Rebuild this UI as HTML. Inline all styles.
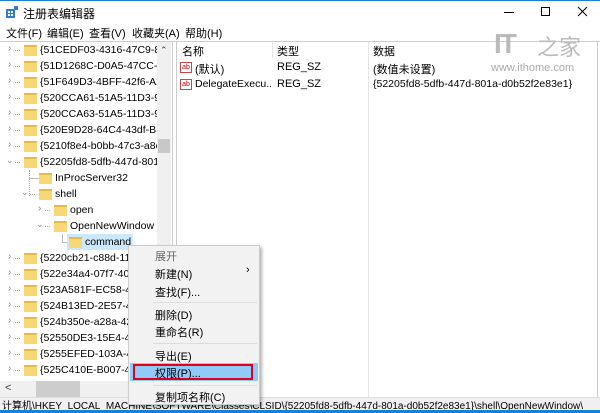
<!DOCTYPE html>
<html><head><meta charset="utf-8"><style>
*{margin:0;padding:0;box-sizing:border-box}
body{width:600px;height:413px;background:#fff;font-family:"Liberation Sans","Noto Sans CJK SC",sans-serif;font-size:11px;color:#000;position:relative;overflow:hidden}
.a{position:absolute;white-space:nowrap}
.fold{position:absolute;width:13px;height:11px;background:#f8d775;border-top:2px solid #e8b84a}
.row{position:absolute;height:16px;line-height:16px;white-space:nowrap;font-size:10.5px}
.chev{position:absolute;color:#888;font-size:10px}
.mi{position:absolute;left:155px;font-size:11px;color:#000}
.sep{position:absolute;left:153px;width:104px;height:1px;background:#ddd}
</style></head><body>
<div class="a" style="left:0;top:0;width:600px;height:1px;background:#1a7fd6"></div>
<svg class="a" style="left:6px;top:6px" width="12" height="12"><rect x="0" y="3" width="9" height="9" fill="#2f7bd0"/><rect x="2" y="5" width="2" height="2" fill="#fff"/><rect x="5" y="5" width="2" height="2" fill="#fff"/><rect x="2" y="8" width="2" height="2" fill="#fff"/><rect x="5" y="8" width="2" height="2" fill="#fff"/><rect x="8" y="0" width="4" height="4" fill="#2f7bd0"/></svg>
<div class="a" style="left:23px;top:5px;font-size:12px">注册表编辑器</div>
<div class="a" style="left:504px;top:12px;width:10px;height:1px;background:#000"></div>
<div class="a" style="left:541px;top:7px;width:9px;height:9px;border:1px solid #000"></div>
<svg class="a" style="left:577px;top:6px" width="11" height="11"><path d="M1 1L10 10M10 1L1 10" stroke="#000" stroke-width="1"/></svg>
<div class="a" style="left:6px;top:25px">文件(F)</div>
<div class="a" style="left:47px;top:25px">编辑(E)</div>
<div class="a" style="left:89px;top:25px">查看(V)</div>
<div class="a" style="left:132px;top:25px">收藏夹(A)</div>
<div class="a" style="left:185px;top:25px">帮助(H)</div>
<div class="a" style="left:0;top:41px;width:600px;height:1px;background:#ccc"></div>
<div class="a" style="left:172px;top:41px;width:1px;height:356px;background:#ccc"></div>
<div class="a" style="left:176px;top:41px;width:1px;height:356px;background:#ccc"></div>
<div class="a" style="left:597px;top:41px;width:1px;height:356px;background:#ccc"></div>
<div class="a" style="left:157px;top:42px;width:14px;height:339px;background:#f0f0f0"></div>
<div class="a" style="left:160px;top:45px;font-size:9px;color:#444">&#8963;</div>
<div class="a" style="left:158px;top:139px;width:12px;height:14px;background:#c8c8c8"></div>
<div class="a" style="left:0;top:381px;width:157px;height:16px;background:#f0f0f0"></div>
<div class="a" style="left:5px;top:382px;font-size:11px;color:#444">&lt;</div>
<div class="a" style="left:36px;top:381px;width:44px;height:16px;background:#cdcdcd"></div>
<div class="a" style="left:29px;top:170px;width:1px;height:26px;border-left:1px dotted #aaa"></div>
<div class="a" style="left:29px;top:178px;width:10px;height:1px;background:#bbb"></div>
<div class="a" style="left:62px;top:234px;width:1px;height:8px;background:#bbb"></div>
<div class="a" style="left:62px;top:242px;width:8px;height:1px;background:#bbb"></div>
<div class="a" style="left:67px;top:234px;width:66px;height:16px;background:#cce8ff"></div>
<div id="tree"></div>
<script>
var rows=[["{51CEDF03-4316-47C9-81",0,1],["{51D1268C-D0A5-47CC-A",0,1],["{51F649D3-4BFF-42f6-A25",0,1],["{520CCA61-51A5-11D3-91",0,1],["{520CCA63-51A5-11D3-91",0,1],["{520E9D28-64C4-43df-BE",0,1],["{5210f8e4-b0bb-47c3-a8c",0,1],["{52205fd8-5dfb-447d-801",0,2],["InProcServer32",1,0],["shell",1,2],["open",2,1],["OpenNewWindow",2,2],["command",3,0],["{5220cb21-c88d-11",0,1],["{522e34a4-07f7-40a",0,1],["{523A581F-EC58-40",0,1],["{524B13ED-2E57-40",0,1],["{524b350e-a28a-42",0,1],["{52550DE3-15E4-4E",0,1],["{5255EFED-103A-44",0,1],["{525C410E-B007-4F",0,1]];
var h="";rows.forEach(function(r,i){var y=42+i*16;var x=24+r[1]*15;
if(r[2]==1)h+='<div class="chev" style="left:'+(x-16)+'px;top:'+(y+1)+'px">&#8250;</div><div class="a" style="left:'+(x-9)+'px;top:'+(y+8)+'px;width:5px;border-top:1px dotted #aaa"></div>';
if(r[2]==2)h+='<div class="chev" style="left:'+(x-18)+'px;top:'+(y+1)+'px;font-size:9px">&#8964;</div><div class="a" style="left:'+(x-9)+'px;top:'+(y+8)+'px;width:5px;border-top:1px dotted #aaa"></div>';
h+='<div class="fold" style="left:'+x+'px;top:'+(y+3)+'px"></div><div class="row" style="left:'+(x+16)+'px;top:'+y+'px;'+(i<8||i>12?'width:'+(157-x-16)+'px;overflow:hidden;':'')+'">'+r[0]+'</div>';});
document.getElementById("tree").outerHTML=h;
</script>
<div class="a" style="left:0;top:378px;width:157px;height:3px;background:#fff"></div>
<div class="a" style="left:182px;top:43px">名称</div>
<div class="a" style="left:272px;top:42px;width:1px;height:16px;background:#e5e5e5"></div>
<div class="a" style="left:277px;top:43px">类型</div>
<div class="a" style="left:368px;top:42px;width:1px;height:356px;background:#e5e5e5"></div>
<div class="a" style="left:373px;top:43px">数据</div>
<div class="a" style="left:180px;top:62px;width:12px;height:11px;border:1px solid #c44;font-size:7px;color:#c00;line-height:9px;text-align:center">ab</div>
<div class="a" style="left:195px;top:61px">(默认)</div>
<div class="a" style="left:277px;top:61px">REG_SZ</div>
<div class="a" style="left:373px;top:61px">(数值未设置)</div>
<div class="a" style="left:180px;top:79px;width:12px;height:11px;border:1px solid #c44;font-size:7px;color:#c00;line-height:9px;text-align:center">ab</div>
<div class="a" style="left:195px;top:78px;width:76px;overflow:hidden;font-size:10.5px">DelegateExecu...</div>
<div class="a" style="left:277px;top:78px">REG_SZ</div>
<div class="a" style="left:373px;top:78px;font-size:10.5px">{52205fd8-5dfb-447d-801a-d0b52f2e83e1}</div>
<div class="a" style="left:494px;top:28px;font-size:28px;font-weight:bold;color:#bbb;letter-spacing:-2px">IT</div>
<div class="a" style="left:537px;top:30px;font-size:22px;color:#bbb">之家</div>
<div class="a" style="left:491px;top:62px;font-size:11px;color:#aaa">www.ithome.com</div>
<div class="a" style="left:0;top:397px;width:600px;height:13px;background:#f0f0f0;border-top:1px solid #ddd"></div>
<div class="a" style="left:2px;top:397px;font-size:10px">计算机\HKEY_LOCAL_MACHINE\SOFTWARE\Classes\CLSID\{52205fd8-5dfb-447d-801a-d0b52f2e83e1}\shell\OpenNewWindow\</div>
<div class="a" style="left:0;top:410px;width:600px;height:3px;background:#1a7fd6"></div>
<div class="a" style="left:128px;top:245px;width:132px;height:160px;background:#f2f2f2;border:1px solid #ccc;box-shadow:2px 2px 3px rgba(0,0,0,.3)"></div>
<div class="mi" style="top:248px;color:#666">展开</div>
<div class="mi" style="top:266px">新建(N)</div>
<div class="a" style="left:246px;top:264px;font-size:11px">›</div>
<div class="mi" style="top:284px">查找(F)...</div>
<div class="sep" style="top:302px"></div>
<div class="mi" style="top:307px">删除(D)</div>
<div class="mi" style="top:324px">重命名(R)</div>
<div class="sep" style="top:343px"></div>
<div class="mi" style="top:348px">导出(E)</div>
<div class="a" style="left:130px;top:363px;width:128px;height:18px;background:#91c9f7"></div>
<div class="a" style="left:133px;top:364px;width:120px;height:16px;border:2px solid #e0001b"></div>
<div class="mi" style="top:365px">权限(P)...</div>
<div class="sep" style="top:385px"></div>
<div class="mi" style="top:389px">复制项名称(C)</div>
</body></html>
